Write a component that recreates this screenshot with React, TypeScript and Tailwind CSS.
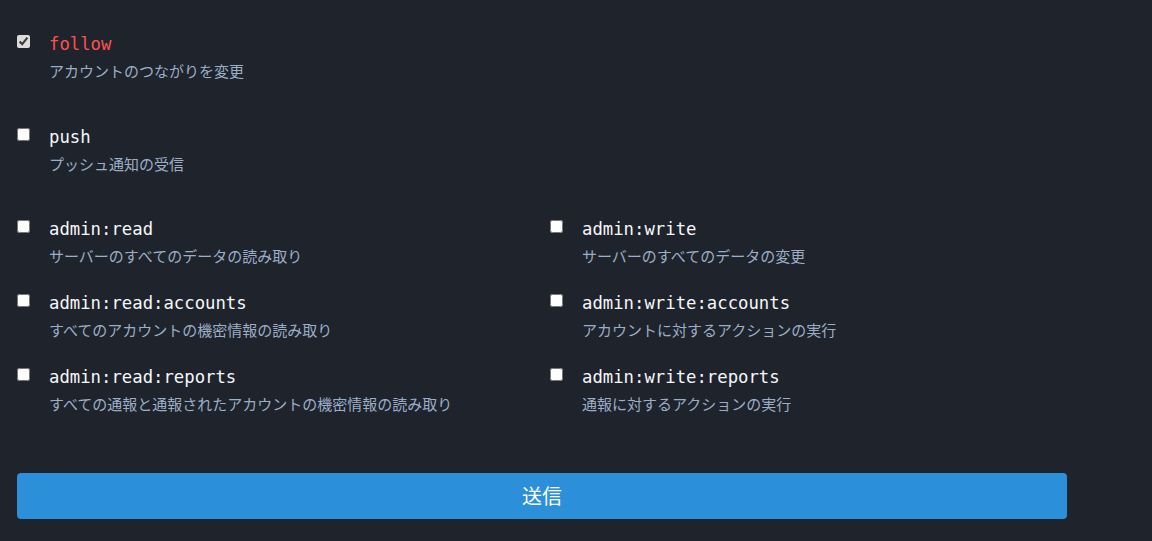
const SINGLE = [
  { name: "follow", hint: "アカウントのつながりを変更", checked: true, danger: true },
  { name: "push", hint: "プッシュ通知の受信", checked: false, danger: false },
];

const PAIRS = [
  { name: "admin:read", hint: "サーバーのすべてのデータの読み取り" },
  { name: "admin:write", hint: "サーバーのすべてのデータの変更" },
  { name: "admin:read:accounts", hint: "すべてのアカウントの機密情報の読み取り" },
  { name: "admin:write:accounts", hint: "アカウントに対するアクションの実行" },
  { name: "admin:read:reports", hint: "すべての通報と通報されたアカウントの機密情報の読み取り" },
  { name: "admin:write:reports", hint: "通報に対するアクションの実行" },
];

function Scope({
  name,
  hint,
  checked = false,
  danger = false,
}: {
  name: string;
  hint: string;
  checked?: boolean;
  danger?: boolean;
}) {
  return (
    <label className="flex items-start gap-[19px]">
      <input
        type="checkbox"
        defaultChecked={checked}
        className="mt-[3px] w-[13px] h-[13px] shrink-0 accent-[#dcdcdc]"
      />
      <div>
        <div
          className={
            "font-['DejaVu_Sans_Mono',monospace] text-[17.3px] leading-[24px] " +
            (danger ? "text-[#ff5050]" : "text-[#f5f7fa]")
          }
        >
          {name}
        </div>
        <div className="mt-[5px] text-[15px] leading-[20px] text-[#9baec8] font-['Noto_Sans_CJK_JP',sans-serif]">
          {hint}
        </div>
      </div>
    </label>
  );
}

export default function App() {
  return (
    <div className="min-h-[541px] bg-[#1f232b] pl-[17px] pt-[32px]">
      <div className="w-[1050px]">
        {/* single column scopes */}
        <div className="flex flex-col gap-[44px]">
          {SINGLE.map((s) => (
            <Scope key={s.name} {...s} />
          ))}
        </div>

        {/* admin scopes, two columns */}
        <div className="grid grid-cols-[533px_1fr] gap-y-[25px] mt-[43px]">
          {PAIRS.map((s) => (
            <Scope key={s.name} {...s} />
          ))}
        </div>

        <button
          type="button"
          className="mt-[59px] w-full h-[46px] rounded-[4px] bg-[#2b90d9] text-white text-[20px] font-['Noto_Sans_CJK_JP',sans-serif]"
        >
          送信
        </button>
      </div>
    </div>
  );
}
